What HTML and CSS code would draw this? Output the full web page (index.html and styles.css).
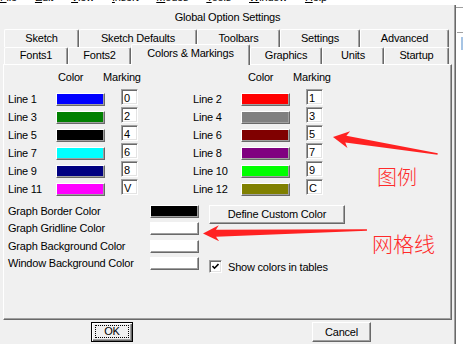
FILE: index.html
```html
<!DOCTYPE html>
<html lang="en">

<head>
    <meta charset="UTF-8">
    <meta name="viewport" content="width=device-width, initial-scale=1.0">
    <title>Global Option Settings</title>
    <link rel="stylesheet" href="styles.css">
</head>

<body>
    <div class="menubar">
        <div class="menu-items">
            <span><u>F</u>ile</span>
            <span><u>E</u>dit</span>
            <span><u>V</u>iew</span>
            <span><u>I</u>nsert</span>
            <span><u>M</u>odes</span>
            <span><u>T</u>ools</span>
            <span><u>W</u>indow</span>
            <span><u>H</u>elp</span>
        </div>
    </div>

    <div class="workspace">
        <div class="dialog">
            <div class="dialog-title">Global Option Settings</div>

            <div class="tabs">
                <div class="tab-row back">
                    <div class="tab">Sketch</div>
                    <div class="tab">Sketch Defaults</div>
                    <div class="tab">Toolbars</div>
                    <div class="tab">Settings</div>
                    <div class="tab">Advanced</div>
                </div>
                <div class="tab-row front">
                    <div class="tab">Fonts1</div>
                    <div class="tab">Fonts2</div>
                    <div class="tab active">Colors &amp; Markings</div>
                    <div class="tab">Graphics</div>
                    <div class="tab">Units</div>
                    <div class="tab">Startup</div>
                </div>
            </div>

            <div class="panel">
                <div class="lines">
                    <div class="line-col">
                        <div class="col-head"><span>Color</span><span>Marking</span></div>
                        <div class="line-row"><span class="line-label">Line 1</span><span class="swatch c-blue"></span><span class="marking">0</span></div>
                        <div class="line-row"><span class="line-label">Line 3</span><span class="swatch c-green"></span><span class="marking">2</span></div>
                        <div class="line-row"><span class="line-label">Line 5</span><span class="swatch c-black"></span><span class="marking">4</span></div>
                        <div class="line-row"><span class="line-label">Line 7</span><span class="swatch c-cyan"></span><span class="marking">6</span></div>
                        <div class="line-row"><span class="line-label">Line 9</span><span class="swatch c-navy"></span><span class="marking">8</span></div>
                        <div class="line-row"><span class="line-label">Line 11</span><span class="swatch c-magenta"></span><span class="marking">V</span></div>
                    </div>
                    <div class="line-col right">
                        <div class="col-head"><span>Color</span><span>Marking</span></div>
                        <div class="line-row"><span class="line-label">Line 2</span><span class="swatch c-red"></span><span class="marking">1</span></div>
                        <div class="line-row"><span class="line-label">Line 4</span><span class="swatch c-gray"></span><span class="marking">3</span></div>
                        <div class="line-row"><span class="line-label">Line 6</span><span class="swatch c-maroon"></span><span class="marking">5</span></div>
                        <div class="line-row"><span class="line-label">Line 8</span><span class="swatch c-purple"></span><span class="marking">7</span></div>
                        <div class="line-row"><span class="line-label">Line 10</span><span class="swatch c-lime"></span><span class="marking">9</span></div>
                        <div class="line-row"><span class="line-label">Line 12</span><span class="swatch c-olive"></span><span class="marking">C</span></div>
                    </div>
                </div>

                <div class="extras">
                    <div class="extra-grid">
                        <span class="extra-label">Graph Border Color</span><span class="swatch c-black"></span>
                        <span class="extra-label">Graph Gridline Color</span><span class="swatch c-white"></span>
                        <span class="extra-label">Graph Background Color</span><span class="swatch c-white"></span>
                        <span class="extra-label">Window Background Color</span><span class="swatch c-white"></span>
                    </div>
                    <div class="extra-side">
                        <div class="btn btn-custom">Define Custom Color</div>
                        <div class="check-row">
                            <span class="checkbox">
                                <svg width="7" height="7" viewBox="0 0 7 7"><polyline points="0.5,3 2.5,5.2 6.5,1" fill="none" stroke="#000" stroke-width="1.6"/></svg>
                            </span>
                            <span>Show colors in tables</span>
                        </div>
                    </div>
                </div>
            </div>

            <div class="dialog-buttons">
                <div class="btn btn-ok"><span class="focus">OK</span></div>
                <div class="btn btn-cancel">Cancel</div>
            </div>
        </div>

        <div class="side">
            <div class="side-rule"></div>
            <div class="side-sel"></div>
        </div>
    </div>

    <!-- red annotations drawn over the screenshot -->
    <div class="annotations">
        <svg width="463" height="344" viewBox="0 0 463 344">
            <polygon transform="translate(333 137) rotate(9.2)" points="0,0 16,-8.5 13,-3.4 106,-0.8 106,0.8 13,3.4 16,8.5" fill="#ff2222"/>
            <polygon transform="translate(203 233.5) rotate(-1.2)" points="0,0 16,-8 13,-3.4 164,-0.8 164,0.8 13,3.4 16,8" fill="#ff2222"/>
        </svg>
        <span class="note note-legend">图例</span>
        <span class="note note-grid">网格线</span>
    </div>
</body>

</html>
```

FILE: styles.css
```css
* {
    box-sizing: border-box;
}

body {
    margin: 0;
    width: 463px;
    height: 344px;
    overflow: hidden;
    position: relative;
    background-color: #fff;
    font-family: "Liberation Sans", Arial, sans-serif;
    font-size: 11px;
    letter-spacing: -0.2px;
    color: #000;
}

.menubar {
    height: 5px;
    overflow: hidden;
    background-color: #fff;
}

.menu-items {
    display: flex;
    gap: 18px;
    margin-top: -9px;
    line-height: 13px;
}

.workspace {
    display: flex;
    height: 339px;
}

.dialog {
    width: 456px;
    background-color: #f0f0f0;
    border-right: 1px solid #696969;
    box-shadow: inset -1px 0 #a0a0a0;
}

.side {
    flex: 1;
    margin-top: 2px;
    border-top: 1px solid #a0a0a0;
}

.side-rule {
    height: 1px;
    margin: 24px 0 0 1px;
    background-color: #a0a0a0;
}

.side-sel {
    height: 13px;
    margin: 4px 0 0 5px;
    background-color: #a6c4e4;
}

.dialog-title {
    height: 24px;
    line-height: 24px;
    text-align: center;
}

/* tabs */
.tabs {
    padding-left: 4px;
}

.tab-row {
    display: grid;
    width: 445px;
}

.tab-row.back {
    grid-template-columns: 75px 118px 83px 80px 89px;
    height: 18px;
}

.tab-row.front {
    grid-template-columns: 64px 63px 119px 72px 62px 65px;
    height: 20px;
    margin-top: -3px;
    align-items: end;
}

.tab {
    height: 18px;
    background-color: #f0f0f0;
    border-top: 1px solid #fff;
    border-left: 1px solid #fff;
    border-right: 1px solid #696969;
    border-radius: 2px 2px 0 0;
    box-shadow: inset -1px 0 #a0a0a0;
    text-align: center;
    line-height: 16px;
    white-space: nowrap;
}

.front .tab {
    height: 17px;
    line-height: 14px;
}

.front .tab.active {
    height: 21px;
    margin-bottom: -1px;
    line-height: 16px;
    position: relative;
    z-index: 1;
}

/* page body */
.panel {
    width: 449px;
    height: 256px;
    margin-left: 3px;
    padding: 5px 0 0 4px;
    border-top: 1px solid #fff;
    border-left: 1px solid #fff;
    border-right: 1px solid #696969;
    border-bottom: 1px solid #696969;
    box-shadow: inset -1px -1px #a0a0a0;
}

.lines {
    display: flex;
}

.line-col {
    width: 185px;
}

.col-head {
    display: grid;
    grid-template-columns: 45px auto;
    height: 14px;
    line-height: 14px;
    padding-left: 50px;
    margin-bottom: 5px;
}

.line-col.right .col-head {
    padding-left: 55px;
}

.line-row {
    display: flex;
    align-items: flex-start;
    height: 18px;
}

.line-label {
    width: 48px;
    margin-top: 4px;
    line-height: 13px;
}

.swatch {
    display: block;
    width: 49px;
    height: 13px;
    border-top: 1px solid #fff;
    border-left: 1px solid #fff;
    border-right: 1px solid #696969;
    border-bottom: 1px solid #696969;
    box-shadow: inset -1px -1px #a0a0a0;
}

.line-row .swatch {
    margin-top: 4px;
}

.marking {
    width: 17px;
    height: 16px;
    margin-left: 16px;
    padding: 1px 0 0 2px;
    line-height: 15px;
    background-color: #fff;
    border-top: 1px solid #a0a0a0;
    border-left: 1px solid #a0a0a0;
    border-right: 1px solid #fff;
    border-bottom: 1px solid #fff;
    box-shadow: inset 1px 1px #696969, inset -1px -1px #e3e3e3;
}

.c-blue { background-color: #0000ff; }
.c-green { background-color: #008000; }
.c-black { background-color: #000; }
.c-cyan { background-color: #00ffff; }
.c-navy { background-color: #000080; }
.c-magenta { background-color: #ff00ff; }
.c-red { background-color: #ff0000; }
.c-gray { background-color: #808080; }
.c-maroon { background-color: #800000; }
.c-purple { background-color: #800080; }
.c-lime { background-color: #00ff00; }
.c-olive { background-color: #808000; }
.c-white { background-color: #fff; }

.extras {
    display: flex;
    margin-top: 8px;
}

.extra-grid {
    display: grid;
    grid-template-columns: 142px 49px;
    grid-template-rows: 17px 18px 17px 17px;
}

.extra-label {
    line-height: 13px;
    white-space: nowrap;
}

.extra-side {
    display: flex;
    flex-direction: column;
    justify-content: space-between;
    margin-left: 10px;
    padding-bottom: 1px;
}

.btn {
    background-color: #f0f0f0;
    border-top: 1px solid #fff;
    border-left: 1px solid #fff;
    border-right: 1px solid #696969;
    border-bottom: 1px solid #696969;
    box-shadow: inset -1px -1px #a0a0a0;
    text-align: center;
}

.btn-custom {
    width: 136px;
    height: 19px;
    line-height: 17px;
}

.check-row {
    display: flex;
    align-items: center;
    gap: 6px;
    height: 13px;
}

.checkbox {
    display: flex;
    align-items: center;
    justify-content: center;
    width: 13px;
    height: 13px;
    background-color: #fff;
    border: 1px solid;
    border-color: #a0a0a0 #fff #fff #a0a0a0;
    box-shadow: inset 1px 1px #696969, inset -1px -1px #e3e3e3;
}

/* OK / Cancel */
.dialog-buttons {
    display: flex;
    align-items: flex-start;
    padding: 2px 0 0 91px;
}

.btn-ok {
    width: 42px;
    height: 20px;
    padding: 2px 3px 0;
    border: 1px solid #000;
    box-shadow: inset 1px 1px #fff, inset -1px -1px #696969, inset -2px -2px #a0a0a0;
}

.focus {
    display: block;
    height: 13px;
    line-height: 11px;
    border: 1px dotted #000;
}

.btn-cancel {
    width: 59px;
    height: 20px;
    margin-left: 179px;
    line-height: 18px;
}

/* annotations */
.annotations {
    position: absolute;
    left: 0;
    top: 0;
    width: 463px;
    height: 344px;
    pointer-events: none;
}

.annotations svg {
    display: block;
}

.note {
    position: absolute;
    font-family: "Noto Sans CJK SC", sans-serif;
    line-height: 1;
    letter-spacing: 0;
    color: #ff2a2a;
    font-weight: 300;
}

.note-legend {
    left: 377px;
    top: 167px;
    font-size: 20px;
}

.note-grid {
    left: 372px;
    top: 233px;
    font-size: 21px;
}
```
